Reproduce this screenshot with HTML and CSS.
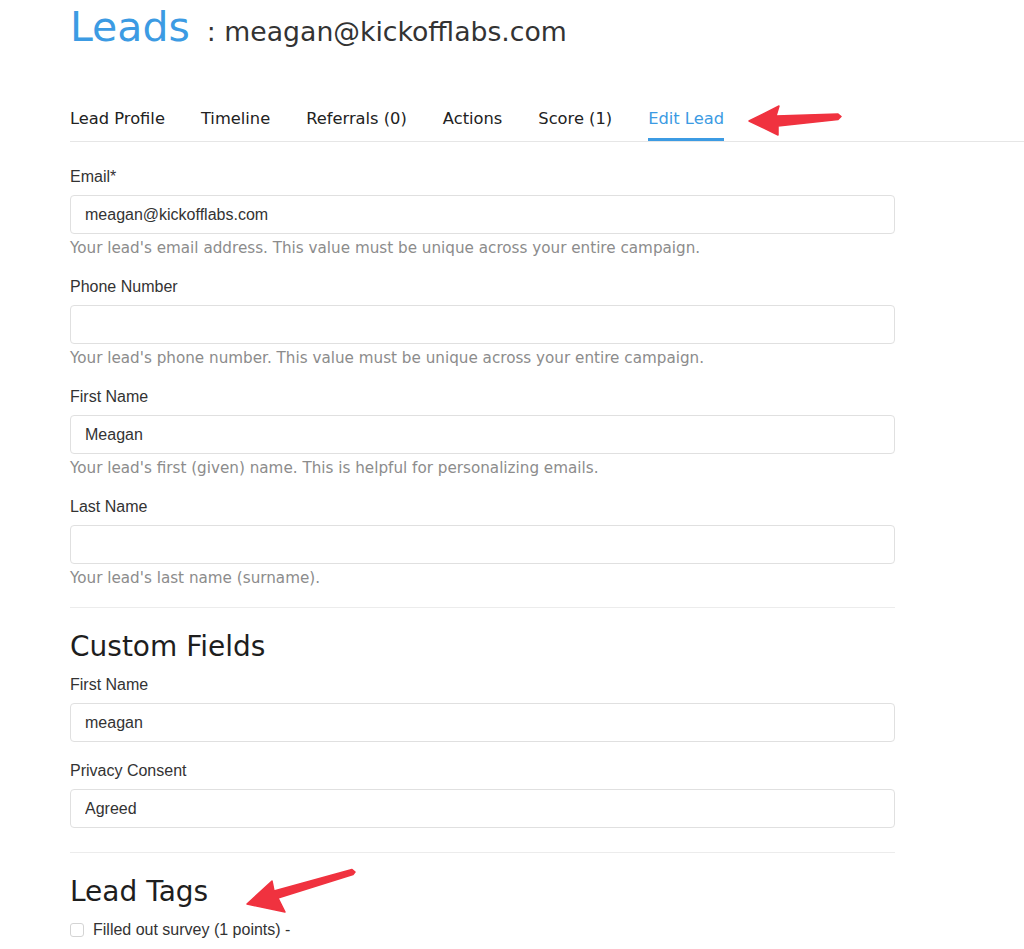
FILE: index.html
```html
<!DOCTYPE html>
<html lang="en">
<head>
    <meta charset="UTF-8">
    <meta name="viewport" content="width=device-width, initial-scale=1.0">
    <title>Leads : meagan@kickofflabs.com</title>
    <link rel="stylesheet" href="styles.css">
</head>
<body>
<div class="page">
    <div class="header">
        <h1>Leads</h1>
        <span class="lead-email">: meagan@kickofflabs.com</span>
    </div>
    <ul class="tabs">
        <li>Lead Profile</li>
        <li>Timeline</li>
        <li>Referrals (0)</li>
        <li>Actions</li>
        <li>Score (1)</li>
        <li class="active">Edit Lead</li>
    </ul>
    <form class="lead-form">
        <div class="field">
            <label for="email">Email*</label>
            <input id="email" type="text" value="meagan@kickofflabs.com">
            <p class="help">Your lead's email address. This value must be unique across your entire campaign.</p>
        </div>
        <div class="field">
            <label for="phone">Phone Number</label>
            <input id="phone" type="text" value="">
            <p class="help">Your lead's phone number. This value must be unique across your entire campaign.</p>
        </div>
        <div class="field">
            <label for="first">First Name</label>
            <input id="first" type="text" value="Meagan">
            <p class="help">Your lead's first (given) name. This is helpful for personalizing emails.</p>
        </div>
        <div class="field">
            <label for="last">Last Name</label>
            <input id="last" type="text" value="">
            <p class="help">Your lead's last name (surname).</p>
        </div>
        <hr>
        <h2>Custom Fields</h2>
        <div class="field">
            <label for="cf-first">First Name</label>
            <input id="cf-first" type="text" value="meagan">
        </div>
        <div class="field">
            <label for="cf-privacy">Privacy Consent</label>
            <input id="cf-privacy" type="text" value="Agreed">
        </div>
        <hr class="tags-rule">
        <h2>Lead Tags</h2>
        <label class="tag"><input type="checkbox"> Filled out survey (1 points) -</label>
    </form>
    <svg class="arrows" width="1024" height="949" viewBox="0 0 1024 949">
        <polygon points="749,121 779,106 776,116 838,114 841,116.5 838,119.5 778,126 778,135"/>
        <polygon points="247,904 272,881 274,891 352,869.5 355,872 353,874.5 278,898 285,912"/>
    </svg>
</div>
</body>
</html>
```

FILE: styles.css
```css
body {
    margin: 0;
    padding: 0;
    background: #ffffff;
    color: #333333;
    font-family: 'DejaVu Sans', Verdana, sans-serif;
}
.page {
    position: relative;
    min-height: 949px;
    padding-left: 70px;
    box-sizing: border-box;
}
.header {
    display: flex;
    align-items: baseline;
    padding-top: 1px;
    line-height: 52px;
}
h1 {
    margin: 0;
    font-size: 41px;
    font-weight: normal;
    color: #3c9be3;
}
.lead-email {
    margin-left: 17px;
    font-size: 26.7px;
    color: #333333;
}
.tabs {
    display: flex;
    gap: 36px;
    list-style-type: none;
    margin: 51px 0 0 0;
    padding: 0;
    border-bottom: 1px solid #e6e6e6;
}
.tabs li {
    font-size: 16.3px;
    line-height: 20px;
    color: #222222;
    padding-bottom: 9px;
    border-bottom: 3px solid transparent;
}
.tabs li.active {
    color: #3c9be3;
    border-bottom-color: #3c9be3;
}
.lead-form {
    width: 825px;
    padding-top: 25px;
}
.field {
    margin-bottom: 19px;
}
.field label {
    display: block;
    font-family: 'Liberation Sans', Arial, sans-serif;
    font-size: 16px;
    line-height: 20px;
    color: #333333;
    margin-bottom: 8px;
}
.field input {
    display: block;
    width: 100%;
    height: 39px;
    box-sizing: border-box;
    padding: 0 14px;
    border: 1px solid #e0e0e0;
    border-radius: 4px;
    font-family: 'Liberation Sans', Arial, sans-serif;
    font-size: 16px;
    color: #333333;
    background: #ffffff;
    outline: none;
}
.help {
    margin: 4px 0 0 0;
    font-size: 15.2px;
    line-height: 20px;
    color: #8c8c8c;
}
hr {
    border: none;
    border-top: 1px solid #ececec;
    margin: 3px 0 0 0;
}
hr.tags-rule {
    margin-top: 24px;
}
h2 {
    margin: 22px 0 11px 0;
    font-size: 28px;
    line-height: 34px;
    font-weight: normal;
    color: #1e1e1e;
}
.tag {
    display: flex;
    align-items: center;
    gap: 9px;
    font-family: 'Liberation Sans', Arial, sans-serif;
    font-size: 16px;
    line-height: 20px;
    color: #333333;
}
.tag input {
    appearance: none;
    margin: 0;
    width: 14px;
    height: 14px;
    border: 1px solid #d4d4d4;
    border-radius: 3px;
    background: #ffffff;
}
.arrows {
    position: absolute;
    top: 0;
    left: 0;
    pointer-events: none;
}
.arrows polygon {
    fill: #f0323f;
    stroke: #f0323f;
    stroke-width: 1.5;
    stroke-linejoin: round;
}
```
